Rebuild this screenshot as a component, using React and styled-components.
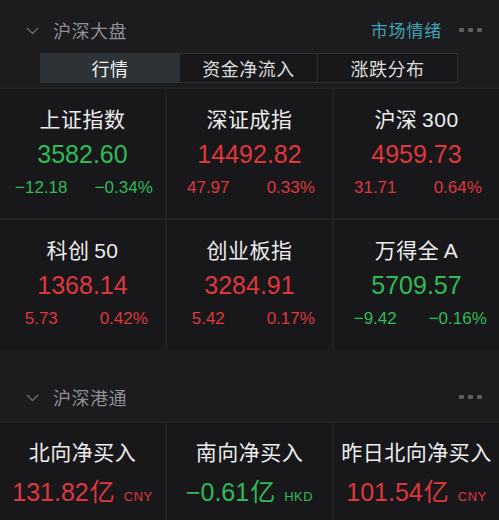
import React from "react";
import styled, { createGlobalStyle } from "styled-components";

const GlobalStyle = createGlobalStyle`
  html, body {
    margin: 0;
    padding: 0;
    background: #1c1c1f;
  }
  body {
    font-family: "Liberation Sans", "Noto Sans CJK SC", sans-serif;
    -webkit-font-smoothing: antialiased;
  }
`;

const Page = styled.div`
  width: 499px;
  height: 520px;
  overflow: hidden;
  background: #1c1c1f;
`;

const SectionHead = styled.div`
  display: flex;
  align-items: center;
  height: ${(p) => p.h}px;
  padding: ${(p) => p.pt}px 16px 0 26px;
  box-sizing: border-box;
`;

const Chevron = styled.svg`
  width: 13px;
  height: 8px;
  margin-right: 14px;
  margin-top: 2px;
`;

const SectionTitle = styled.div`
  flex: 1;
  font-family: "Noto Sans CJK SC", sans-serif;
  font-size: 18px;
  color: #8f8f94;
  letter-spacing: 0.5px;
`;

const SideLink = styled.div`
  font-family: "Noto Sans CJK SC", sans-serif;
  font-size: 17px;
  color: #3fa3b8;
  margin-right: 17px;
  letter-spacing: 0.8px;
`;

const Dots = styled.div`
  display: flex;
  gap: 4px;
  margin-right: 1px;
  span {
    width: 5px;
    height: 4px;
    border-radius: 1px;
    background: #5d5d62;
  }
`;

const Tabs = styled.div`
  display: grid;
  grid-template-columns: 140px 138px 140px;
  margin: 0 41px 0 40px;
  height: 30px;
`;

const Tab = styled.div`
  display: flex;
  align-items: center;
  justify-content: center;
  font-family: "Noto Sans CJK SC", sans-serif;
  font-size: 18px;
  color: ${(p) => (p.active ? "#f2f2f2" : "#dcdcdc")};
  background: ${(p) => (p.active ? "#2c3236" : "#18181a")};
  border: 1px solid ${(p) => (p.active ? "#2c3236" : "#2f2f33")};
  border-left-width: ${(p) => (p.first ? 1 : 0)}px;
  letter-spacing: 0.5px;
`;

const Grid = styled.div`
  display: grid;
  grid-template-columns: repeat(3, 1fr);
  gap: 2px;
  margin-top: ${(p) => p.mt || 0}px;
  padding: 2px 0 0;
  background: #222225;
`;

const Cell = styled.div`
  background: #18181b;
  height: ${(p) => p.h}px;
  display: flex;
  flex-direction: column;
  align-items: center;
`;

const Name = styled.div`
  font-family: "Liberation Sans", "Noto Sans CJK SC", sans-serif;
  font-size: 21px;
  color: #ececec;
  margin-top: ${(p) => p.mt}px;
  height: 30px;
  line-height: 30px;
  letter-spacing: 0.5px;
`;

const Value = styled.div`
  font-size: 25px;
  color: ${(p) => (p.up ? "#df373c" : "#2fbb58")};
  margin-top: ${(p) => p.mt}px;
  height: 30px;
  line-height: 30px;
  white-space: nowrap;
`;

const Unit = styled.span`
  font-family: "Noto Sans CJK SC", sans-serif;
  font-size: 25px;
  margin-left: 1px;
`;

const Currency = styled.span`
  font-size: 13px;
  margin-left: 9px;
  letter-spacing: 0.5px;
`;

const Changes = styled.div`
  display: grid;
  grid-template-columns: 1fr 1fr;
  width: 100%;
  margin-top: 4px;
  font-size: 17px;
  color: ${(p) => (p.up ? "#df373c" : "#2fbb58")};
  span {
    text-align: center;
    height: 30px;
    line-height: 30px;
  }
`;

const Chev = () => (
  <Chevron viewBox="0 0 13 8">
    <path d="M1 1 L6.5 6.5 L12 1" fill="none" stroke="#6b6b70" strokeWidth="1.3" />
  </Chevron>
);

const More = () => (
  <Dots>
    <span />
    <span />
    <span />
  </Dots>
);

const indices = [
  { name: "上证指数", value: "3582.60", a: "−12.18", b: "−0.34%", up: false },
  { name: "深证成指", value: "14492.82", a: "47.97", b: "0.33%", up: true },
  { name: "沪深\u2009300", value: "4959.73", a: "31.71", b: "0.64%", up: true },
  { name: "科创\u200950", value: "1368.14", a: "5.73", b: "0.42%", up: true },
  { name: "创业板指", value: "3284.91", a: "5.42", b: "0.17%", up: true },
  { name: "万得全\u2009A", value: "5709.57", a: "−9.42", b: "−0.16%", up: false },
];

const flows = [
  { name: "北向净买入", value: "131.82", cur: "CNY", up: true },
  { name: "南向净买入", value: "−0.61", cur: "HKD", up: false },
  { name: "昨日北向净买入", value: "101.54", cur: "CNY", up: true },
];

export default function App() {
  return (
    <Page>
      <GlobalStyle />
      <SectionHead h={53} pt={6}>
        <Chev />
        <SectionTitle>沪深大盘</SectionTitle>
        <SideLink>市场情绪</SideLink>
        <More />
      </SectionHead>
      <Tabs>
        <Tab active first>
          行情
        </Tab>
        <Tab>资金净流入</Tab>
        <Tab>涨跌分布</Tab>
      </Tabs>
      <Grid mt={4}>
        {indices.map((it) => (
          <Cell key={it.name} h={129}>
            <Name mt={16}>{it.name}</Name>
            <Value up={it.up} mt={4}>
              {it.value}
            </Value>
            <Changes up={it.up}>
              <span>{it.a}</span>
              <span>{it.b}</span>
            </Changes>
          </Cell>
        ))}
      </Grid>
      <SectionHead h={72} pt={24}>
        <Chev />
        <SectionTitle>沪深港通</SectionTitle>
        <More />
      </SectionHead>
      <Grid>
        {flows.map((it) => (
          <Cell key={it.name} h={120}>
            <Name mt={15}>{it.name}</Name>
            <Value up={it.up} mt={7}>
              {it.value}
              <Unit>亿</Unit>
              <Currency>{it.cur}</Currency>
            </Value>
          </Cell>
        ))}
      </Grid>
    </Page>
  );
}
